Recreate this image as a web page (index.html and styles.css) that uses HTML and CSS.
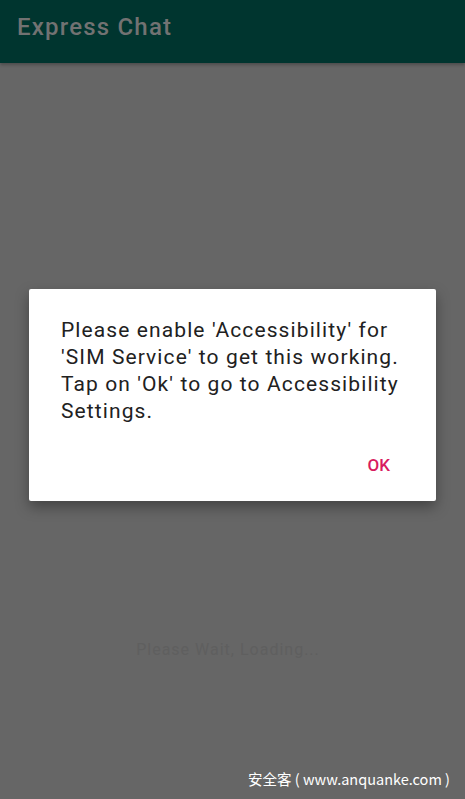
FILE: index.html
```html
<!DOCTYPE html>
<html lang="en">
  <head>
    <meta charset="UTF-8" />
    <meta name="viewport" content="width=device-width, initial-scale=1.0" />
    <title>Express Chat</title>
    <link rel="stylesheet" href="styles.css">
  </head>
  <body>
    <div class="app">
      <header class="toolbar">
        <h1>Express Chat</h1>
      </header>

      <main class="content">
        <div class="dialog">
          <p class="dialog-message">
            Please enable 'Accessibility' for 'SIM Service' to get this working.
            Tap on 'Ok' to go to Accessibility Settings.
          </p>
          <div class="dialog-actions">
            <button class="dialog-button">OK</button>
          </div>
        </div>

        <p class="loading">Please Wait, Loading...</p>
      </main>

      <div class="watermark">安全客 ( www.anquanke.com )</div>
    </div>
  </body>
</html>
```

FILE: styles.css
```css
body {
  margin: 0;
  font-family: Roboto, "Noto Sans", sans-serif;
  background-color: #666666;
}
.app {
  height: 799px;
  display: flex;
  flex-direction: column;
  position: relative;
  overflow: hidden;
}
.toolbar {
  height: 63px;
  box-sizing: border-box;
  background-color: #00352f;
  display: flex;
  align-items: center;
  padding: 0 0 10px 17px;
  box-shadow: 0 2px 3px rgba(0, 0, 0, 0.25);
  position: relative;
  z-index: 1;
}
.toolbar h1 {
  margin: 0;
  font-size: 24px;
  font-weight: 500;
  letter-spacing: 1.2px;
  color: #727272;
}
.content {
  flex: 1;
  display: flex;
  flex-direction: column;
  align-items: center;
}
.dialog {
  margin-top: 226px;
  width: 407px;
  box-sizing: border-box;
  background-color: #fff;
  border-radius: 2px;
  box-shadow: 0 6px 14px rgba(0, 0, 0, 0.35);
  padding: 28px 28px 22px 32px;
}
.dialog-message {
  margin: 0;
  font-size: 21px;
  letter-spacing: 1.1px;
  line-height: 27px;
  color: #212121;
}
.dialog-actions {
  display: flex;
  justify-content: flex-end;
  margin-top: 26px;
}
.dialog-button {
  border: none;
  background: none;
  font-family: Roboto, sans-serif;
  font-size: 17px;
  font-weight: 500;
  color: #d81b60;
  padding: 4px 18px 4px 8px;
}
.loading {
  margin: 139px 9px 0 0;
  font-size: 16px;
  letter-spacing: 1px;
  color: #5f5f5f;
}
.watermark {
  position: absolute;
  right: 15px;
  bottom: 10px;
  font-family: "Noto Sans CJK SC", "Noto Sans", sans-serif;
  font-size: 14.5px;
  color: #fff;
}
```
